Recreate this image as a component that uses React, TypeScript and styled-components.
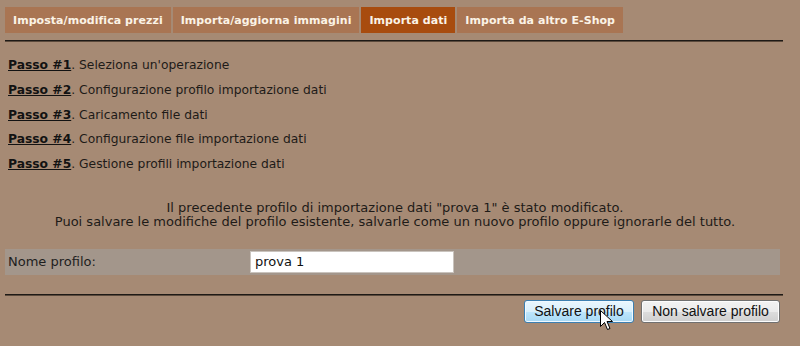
import React from "react";
import styled, { createGlobalStyle } from "styled-components";

const Global = createGlobalStyle`
  html, body { margin: 0; padding: 0; background: #a68a74; }
  body { width: 800px; height: 346px; overflow: hidden; }
`;

const Page = styled.div`
  position: relative;
  padding: 7px 17px 0 5px;
  font-family: "DejaVu Sans", Verdana, sans-serif;
  color: #1c1c1c;
`;

const Tabs = styled.div`
  display: flex;
  gap: 2px;
`;

const Tab = styled.div<{ $active?: boolean }>`
  height: 26px;
  display: flex;
  align-items: center;
  padding: 0 8px;
  background: ${(p) => (p.$active ? "#a84c0e" : "#a97553")};
  color: #fbf3e6;
  font-weight: bold;
  font-size: 11px;
  letter-spacing: 0.05px;
  white-space: nowrap;
`;

const Rule = styled.div<{ $top: number }>`
  margin-top: ${(p) => p.$top}px;
  height: 1px;
  border-top: 1px solid #1e1a16;
  background: #5b4a3c;
`;

const Steps = styled.div`
  margin-top: 11px;
  padding-left: 3px;
`;

const Step = styled.div`
  height: 24.75px;
  line-height: 24.75px;
  font-size: 12.3px;
  font-family: "DejaVu Sans", Verdana, sans-serif;
  color: #1e1b18;
  white-space: nowrap;
`;

const StepLink = styled.a`
  font-weight: bold;
  color: #121212;
  text-decoration: underline;
`;

const Message = styled.div`
  margin-top: 24px;
  text-align: center;
  font-family: "DejaVu Sans", Verdana, sans-serif;
  font-size: 13px;
  line-height: 14px;
  color: #1e1b18;
  padding-left: 2px;
  white-space: nowrap;
`;

const FormRow = styled.div`
  margin-top: 20px;
  width: 775px;
  height: 26px;
  background: #a3968b;
  display: flex;
  align-items: center;
`;

const Label = styled.div`
  box-sizing: border-box;
  width: 245px;
  padding-left: 3px;
  font-family: "DejaVu Sans", Verdana, sans-serif;
  font-size: 13px;
  color: #1e1e1e;
`;

const Input = styled.input`
  box-sizing: border-box;
  width: 204px;
  height: 22px;
  border: 1px solid #c9c3bd;
  background: #fff;
  padding: 0 4px;
  font-family: "DejaVu Sans", Verdana, sans-serif;
  font-size: 13px;
  color: #111;
  outline: none;
`;

const Buttons = styled.div`
  margin-top: 4px;
  width: 775px;
  display: flex;
  justify-content: flex-end;
  gap: 7px;
`;

const Button = styled.button<{ $hover?: boolean; $w: number }>`
  box-sizing: border-box;
  width: ${(p) => p.$w}px;
  height: 23px;
  padding: 0;
  border-radius: 3px;
  font-family: "Liberation Sans", Arial, sans-serif;
  font-size: 14px;
  color: #111;
  border: 1px solid ${(p) => (p.$hover ? "#3c7fb1" : "#707070")};
  background: ${(p) =>
    p.$hover
      ? "linear-gradient(#eaf6fd 0%, #d9f0fc 50%, #bee6fd 51%, #a7d9f5 100%)"
      : "linear-gradient(#f2f2f2 0%, #ebebeb 50%, #dddddd 51%, #cfcfcf 100%)"};
  box-shadow: inset 0 0 0 1px ${(p) => (p.$hover ? "#f0f9ff" : "#fcfcfc")};
`;

const Cursor = styled.svg`
  position: absolute;
  left: 600px;
  top: 310px;
`;

const steps = [
  ["Passo #1", "Seleziona un'operazione"],
  ["Passo #2", "Configurazione profilo importazione dati"],
  ["Passo #3", "Caricamento file dati"],
  ["Passo #4", "Configurazione file importazione dati"],
  ["Passo #5", "Gestione profili importazione dati"],
];

export default function App() {
  return (
    <Page>
      <Global />
      <Tabs>
        <Tab>Imposta/modifica prezzi</Tab>
        <Tab>Importa/aggiorna immagini</Tab>
        <Tab $active>Importa dati</Tab>
        <Tab>Importa da altro E-Shop</Tab>
      </Tabs>
      <Rule $top={7} />
      <Steps>
        {steps.map(([a, b]) => (
          <Step key={a}>
            <StepLink>{a}</StepLink>. {b}
          </Step>
        ))}
      </Steps>
      <Message>
        Il precedente profilo di importazione dati "prova 1" è stato modificato.
        <br />
        Puoi salvare le modifiche del profilo esistente, salvarle come un nuovo profilo oppure ignorarle del tutto.
      </Message>
      <FormRow>
        <Label>Nome profilo:</Label>
        <Input defaultValue="prova 1" />
      </FormRow>
      <Rule $top={19} />
      <Buttons>
        <Button $hover $w={110}>Salvare profilo</Button>
        <Button $w={139}>Non salvare profilo</Button>
      </Buttons>
      <Cursor width="13" height="21" viewBox="0 0 13 21">
        <path d="M0.5 0.5 L0.5 16.5 L4.5 12.5 L7.5 19.5 L10 18.5 L7 11.5 L12.5 11.5 Z" fill="#fff" stroke="#000" strokeWidth="1" />
      </Cursor>
    </Page>
  );
}
